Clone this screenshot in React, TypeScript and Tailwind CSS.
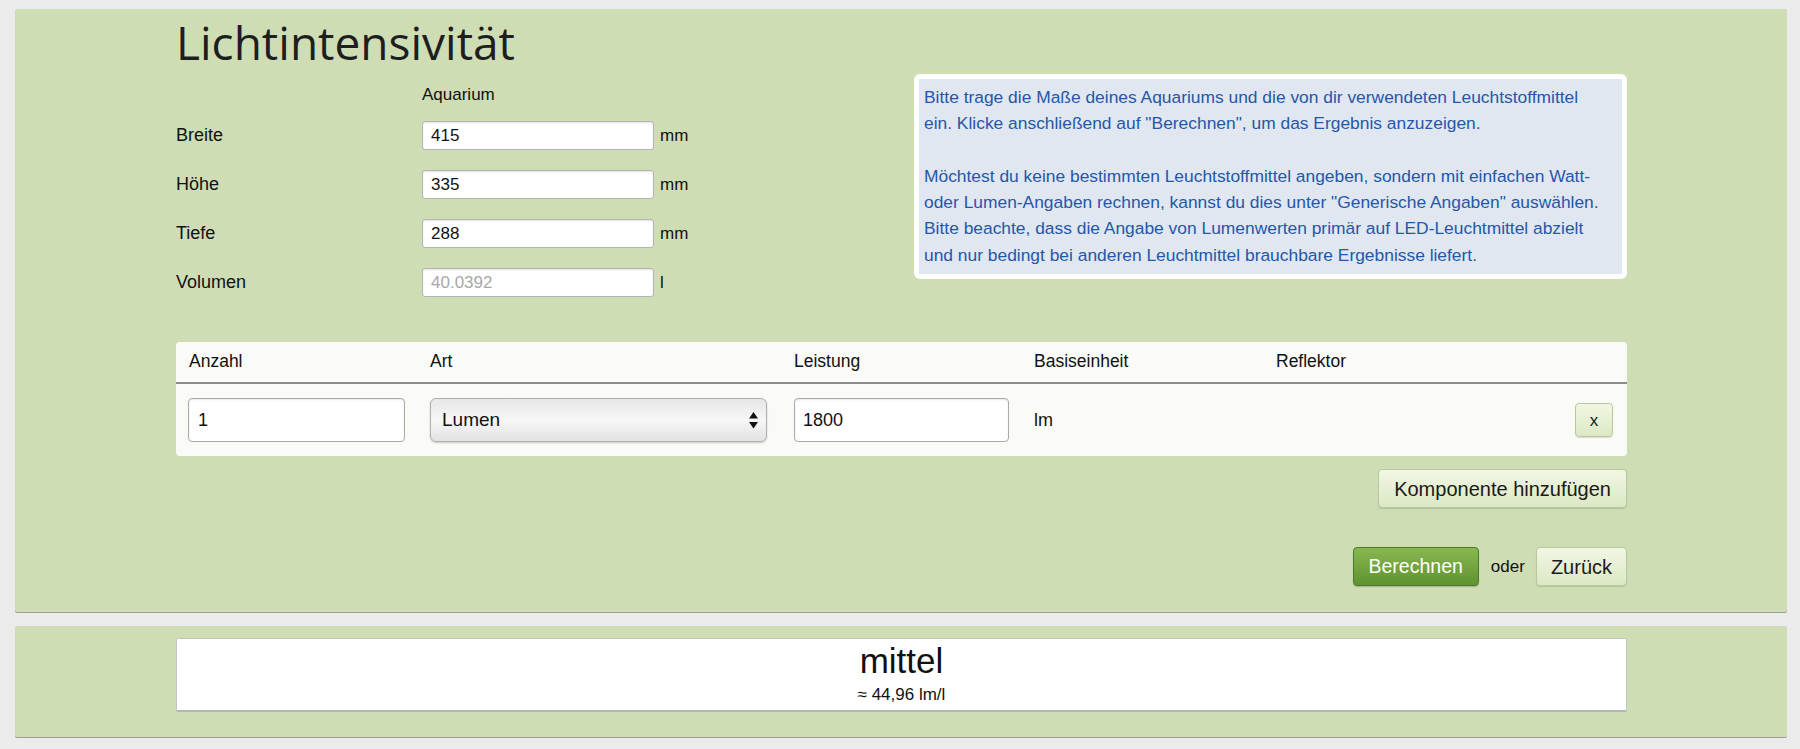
import React from "react";

function TextInput({ value, muted }: { value: string; muted?: boolean }) {
  return (
    <div
      className={`h-[29px] w-[232px] rounded-[3px] border border-[#b4b4b4] bg-white pl-[8px] text-[17px] leading-[27px] shadow-[inset_0_1px_2px_rgba(0,0,0,0.12)] ${
        muted ? "text-[#a8a8a8]" : "text-[#111]"
      }`}
    >
      {value}
    </div>
  );
}

function LightButton({ children, className }: { children: React.ReactNode; className?: string }) {
  return (
    <button
      className={`rounded-[4px] border border-[#b9c7a0] bg-gradient-to-b from-[#f1f7e4] to-[#dce8c4] text-[#1a1a1a] shadow-[0_1px_1px_rgba(0,0,0,0.12)] ${className ?? ""}`}
    >
      {children}
    </button>
  );
}

export default function App() {
  const rows: [string, string, string, boolean?][] = [
    ["Breite", "415", "mm"],
    ["Höhe", "335", "mm"],
    ["Tiefe", "288", "mm"],
    ["Volumen", "40.0392", "l", true],
  ];

  return (
    <div className="min-h-screen bg-[#ebebeb] pb-[12px] pl-[15px] pr-[13px] pt-[9px] font-['Liberation_Sans',Arial,sans-serif] text-[#111]">
      {/* Main panel */}
      <div className="rounded-[2px] bg-[#cfddb5] pb-[26px] pl-[161px] pr-[160px] pt-[10px] shadow-[0_1px_0_#9c9c9c]">
        <h1 className="h-[46px] font-['Open_Sans',sans-serif] text-[46px] font-normal leading-none text-[#1e1e1e]">
          Lichtintensivität
        </h1>

        <div className="mt-[9px] flex justify-between">
          {/* Left form */}
          <div className="pt-[11px]">
            <div className="flex h-[20px] items-center">
              <div className="w-[246px]" />
              <div className="text-[17px] leading-[20px]">Aquarium</div>
            </div>
            <div className="mt-[16px] flex flex-col gap-[20px]">
              {rows.map(([label, value, unit, muted]) => (
                <div key={label} className="flex h-[29px] items-center">
                  <div className="w-[246px] text-[18px]">{label}</div>
                  <TextInput value={value} muted={muted} />
                  <div className="ml-[6px] text-[17px]">{unit}</div>
                </div>
              ))}
            </div>
          </div>

          {/* Info box */}
          <div className="h-[205px] w-[713px] rounded-[6px] bg-white p-[5px]">
            <div className="h-full whitespace-nowrap bg-[#e0e7f0] px-[5px] py-[5px] text-[17.4px] leading-[26.3px] text-[#2557a9]">
              <p>
                Bitte trage die Maße deines Aquariums und die von dir verwendeten Leuchtstoffmittel
                <br />
                ein. Klicke anschließend auf "Berechnen", um das Ergebnis anzuzeigen.
              </p>
              <p className="mt-[26.3px]">
                Möchtest du keine bestimmten Leuchtstoffmittel angeben, sondern mit einfachen Watt-
                <br />
                oder Lumen-Angaben rechnen, kannst du dies unter "Generische Angaben" auswählen.
                <br />
                Bitte beachte, dass die Angabe von Lumenwerten primär auf LED-Leuchtmittel abzielt
                <br />
                und nur bedingt bei anderen Leuchtmittel brauchbare Ergebnisse liefert.
              </p>
            </div>
          </div>
        </div>

        {/* Components table */}
        <div className="mt-[45px] rounded-[4px] bg-[#fafaf6]">
          <div className="grid h-[42px] grid-cols-[241px_364px_240px_242px_1fr] items-center border-b-2 border-[#8c8c8c] pb-[2px] text-[17.5px]">
            <div className="px-[13px]">Anzahl</div>
            <div className="px-[13px]">Art</div>
            <div className="px-[13px]">Leistung</div>
            <div className="px-[13px]">Basiseinheit</div>
            <div className="px-[13px]">Reflektor</div>
          </div>
          <div className="grid h-[72px] grid-cols-[241px_364px_240px_242px_1fr] items-center text-[18px]">
            <div className="pl-[12px] pr-[12px]">
              <div className="h-[44px] rounded-[4px] border border-[#aaaaaa] bg-white pl-[9px] leading-[42px] shadow-[inset_0_1px_2px_rgba(0,0,0,0.1)]">
                1
              </div>
            </div>
            <div className="pl-[13px] pr-[14px]">
              <div className="relative h-[44px] rounded-[6px] border border-[#b0b0b0] bg-gradient-to-b from-[#e6e6e6] via-[#f7f7f7] to-[#e2e2e2] pl-[11px] text-[19px] leading-[42px] text-[#111] shadow-[0_1px_2px_rgba(0,0,0,0.2)]">
                Lumen
                <svg
                  className="absolute right-[8px] top-[13px]"
                  width="9"
                  height="17"
                  viewBox="0 0 9 17"
                  fill="#111"
                >
                  <path d="M4.5 0 L9 6.5 L0 6.5 Z" />
                  <path d="M0 10 L9 10 L4.5 16.5 Z" />
                </svg>
              </div>
            </div>
            <div className="pl-[13px] pr-[12px]">
              <div className="h-[44px] rounded-[4px] border border-[#aaaaaa] bg-white pl-[8px] leading-[42px] shadow-[inset_0_1px_2px_rgba(0,0,0,0.1)]">
                1800
              </div>
            </div>
            <div className="px-[13px]">lm</div>
            <div className="flex justify-end pr-[14px]">
              <LightButton className="h-[34px] w-[38px] text-[17px] leading-none">x</LightButton>
            </div>
          </div>
        </div>

        <div className="mt-[13px] flex justify-end">
          <LightButton className="h-[39px] px-[15px] text-[20px] leading-none">Komponente hinzufügen</LightButton>
        </div>

        <div className="mt-[39px] flex items-center justify-end">
          <button className="h-[39px] rounded-[4px] border border-[#4d7c28] bg-gradient-to-b from-[#88b74f] to-[#5f9330] px-[15px] text-[19.5px] leading-none text-white shadow-[0_1px_1px_rgba(0,0,0,0.2)]">
            Berechnen
          </button>
          <span className="ml-[12px] mr-[11px] text-[17px]">oder</span>
          <LightButton className="h-[39px] px-[14px] text-[20px] leading-none">Zurück</LightButton>
        </div>
      </div>

      {/* Result panel */}
      <div className="mt-[14px] rounded-[2px] bg-[#cfddb5] pb-[25px] pl-[161px] pr-[160px] pt-[12px] shadow-[0_1px_0_#9c9c9c]">
        <div className="h-[74px] rounded-[2px] border border-b-2 border-[#c4c4c4] border-b-[#b4b4b4] bg-white pt-[4px] text-center">
          <div className="text-[35px] leading-[35px] text-[#111]">mittel</div>
          <div className="mt-[7px] text-[17px] leading-[20px]">≈ 44,96 lm/l</div>
        </div>
      </div>
    </div>
  );
}
